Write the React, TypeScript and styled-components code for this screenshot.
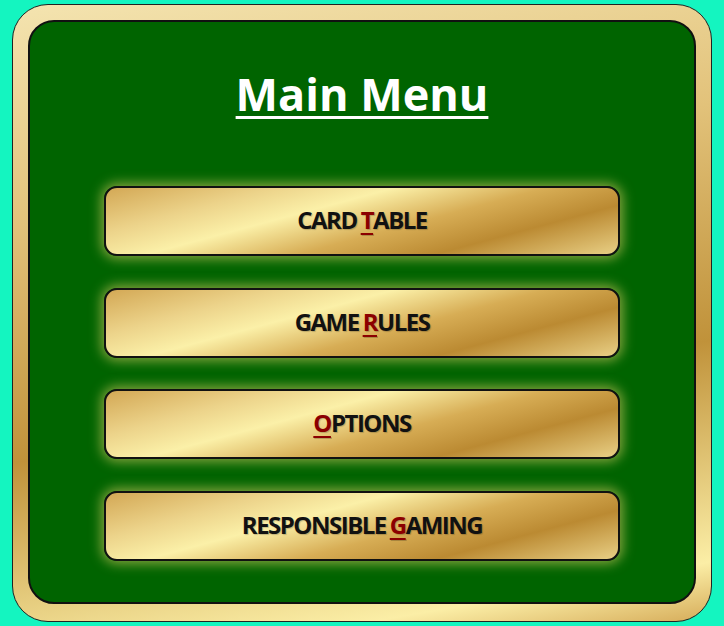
import React from "react";
import styled, { createGlobalStyle } from "styled-components";

const GlobalStyle = createGlobalStyle`
  html, body {
    margin: 0;
    padding: 0;
    background: #14f5c0;
  }
  body {
    font-family: "Open Sans", "Liberation Sans", sans-serif;
  }
`;

const gold =
  "linear-gradient(165deg, #d3a855 0%, #ecd38a 22%, #fbf0a8 38%, #d7ad55 58%, #bb8a32 76%, #e8cf85 100%)";

const Page = styled.div`
  padding: 4px 12px;
  box-sizing: border-box;
  width: 724px;
  height: 626px;
`;

const Frame = styled.div`
  box-sizing: border-box;
  height: 618px;
  border: 1px solid #222;
  border-radius: 36px;
  padding: 15px 15px 17px;
  background: linear-gradient(170deg, #f4e4b0 0%, #e2c27a 30%, #c0923a 62%, #fbeea6 92%, #d6ac5a 100%);
`;

const Table = styled.div`
  box-sizing: border-box;
  height: 100%;
  background: #006400;
  border: 2px solid #111;
  border-radius: 26px;
  display: flex;
  flex-direction: column;
  align-items: center;
  padding-top: 43px;
`;

const Title = styled.h1`
  margin: 0 0 63px;
  font-family: "Open Sans", "Liberation Sans", sans-serif;
  font-weight: 700;
  font-size: 45px;
  line-height: 58px;
  color: #fff;
  text-decoration: underline;
  text-decoration-thickness: 3px;
  text-underline-offset: 5px;
`;

const Menu = styled.div`
  display: flex;
  flex-direction: column;
  gap: 31.6px;
`;

const MenuButton = styled.button`
  box-sizing: border-box;
  width: 516px;
  height: 70px;
  padding: 0 0 3px;
  border: 2px solid #111;
  border-radius: 13px;
  background: ${gold};
  box-shadow: 0 0 12px 3px rgba(240, 215, 110, 0.55);
  font-family: "Open Sans", "Liberation Sans", sans-serif;
  font-weight: 700;
  font-size: 24px;
  letter-spacing: -1.5px;
  color: #111;
  text-shadow: 1px 1px 1px rgba(0, 0, 0, 0.2);
  cursor: pointer;
  display: flex;
  align-items: center;
  justify-content: center;
  gap: 4px;
`;

const Hotkey = styled.span`
  color: #8b0000;
  text-decoration: underline;
  text-decoration-thickness: 2px;
  text-underline-offset: 4px;
`;

type Item = { before: string; key: string; after: string };

const items: Item[] = [
  { before: "CARD", key: "T", after: "ABLE" },
  { before: "GAME", key: "R", after: "ULES" },
  { before: "", key: "O", after: "PTIONS" },
  { before: "RESPONSIBLE", key: "G", after: "AMING" },
];

export default function App() {
  return (
    <>
      <GlobalStyle />
      <Page>
        <Frame>
          <Table>
            <Title>Main Menu</Title>
            <Menu>
              {items.map((it) => (
                <MenuButton key={it.key}>
                  {it.before && <span>{it.before}</span>}
                  <span>
                    <Hotkey>{it.key}</Hotkey>
                    {it.after}
                  </span>
                </MenuButton>
              ))}
            </Menu>
          </Table>
        </Frame>
      </Page>
    </>
  );
}
